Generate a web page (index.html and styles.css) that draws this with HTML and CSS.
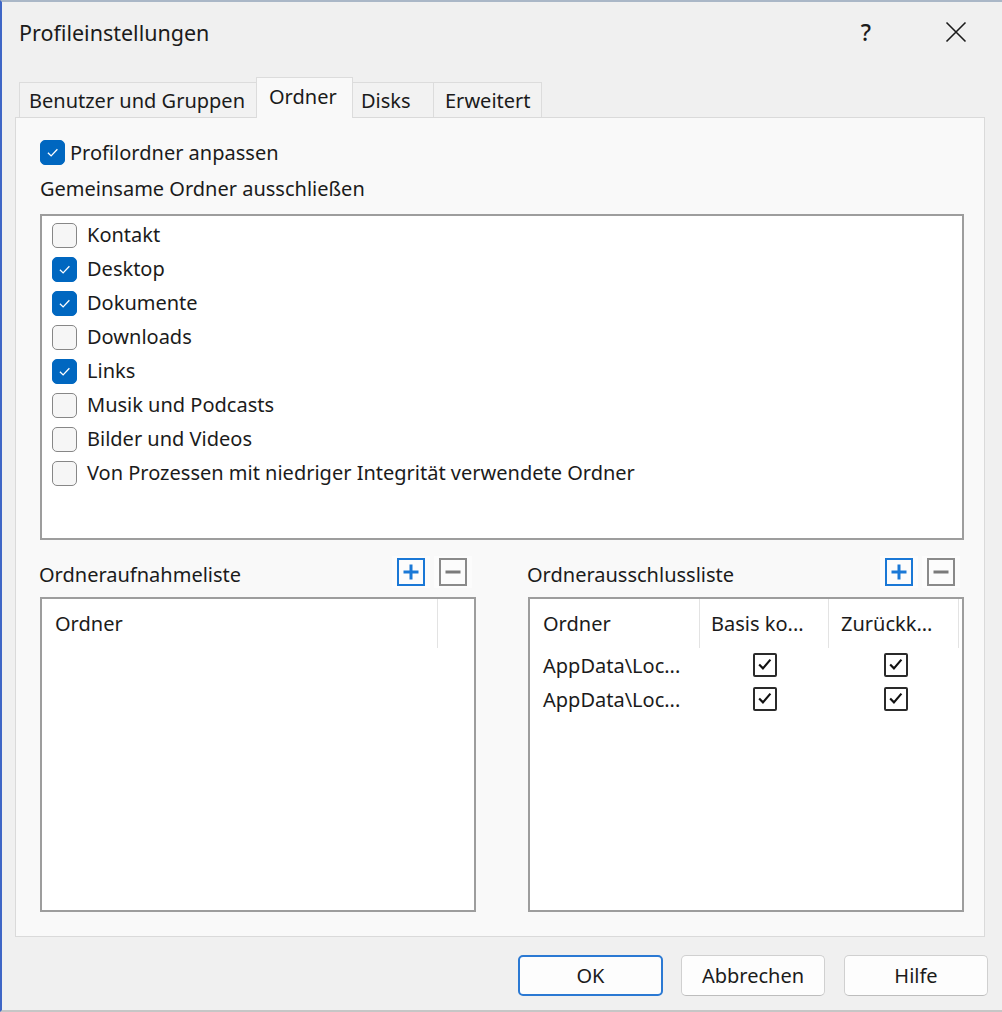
FILE: index.html
```html
<!DOCTYPE html>
<html lang="de">
<head>
<meta charset="utf-8">
<title>Profileinstellungen</title>
<link rel="stylesheet" href="styles.css">
</head>
<body>
<div class="window">
  <div class="titlebar">
    <span class="title">Profileinstellungen</span>
    <span class="help">?</span>
    <span class="close">
      <svg width="22" height="22" viewBox="0 0 22 22"><path d="M1.5 1.5 L20.5 20.5 M20.5 1.5 L1.5 20.5" stroke="#1b1b1b" stroke-width="1.6" fill="none"/></svg>
    </span>
  </div>

  <div class="tabs">
    <div class="tab tab-users">Benutzer und Gruppen</div>
    <div class="tab tab-folders active">Ordner</div>
    <div class="tab tab-disks">Disks</div>
    <div class="tab tab-advanced">Erweitert</div>
  </div>

  <div class="panel">
    <label class="check-row">
      <span class="cb checked"><svg viewBox="0 0 25 25"><path d="M7.5 12.8 L11 16.2 L17.8 9" stroke="#fff" stroke-width="1.4" fill="none"/></svg></span>
      <span class="cb-label">Profilordner anpassen</span>
    </label>
    <div class="section-label">Gemeinsame Ordner ausschließen</div>

    <div class="listbox">
      <div class="item"><span class="cb"></span><span class="cb-label">Kontakt</span></div>
      <div class="item"><span class="cb checked"><svg viewBox="0 0 25 25"><path d="M7.5 12.8 L11 16.2 L17.8 9" stroke="#fff" stroke-width="1.4" fill="none"/></svg></span><span class="cb-label">Desktop</span></div>
      <div class="item"><span class="cb checked"><svg viewBox="0 0 25 25"><path d="M7.5 12.8 L11 16.2 L17.8 9" stroke="#fff" stroke-width="1.4" fill="none"/></svg></span><span class="cb-label">Dokumente</span></div>
      <div class="item"><span class="cb"></span><span class="cb-label">Downloads</span></div>
      <div class="item"><span class="cb checked"><svg viewBox="0 0 25 25"><path d="M7.5 12.8 L11 16.2 L17.8 9" stroke="#fff" stroke-width="1.4" fill="none"/></svg></span><span class="cb-label">Links</span></div>
      <div class="item"><span class="cb"></span><span class="cb-label">Musik und Podcasts</span></div>
      <div class="item"><span class="cb"></span><span class="cb-label">Bilder und Videos</span></div>
      <div class="item"><span class="cb"></span><span class="cb-label">Von Prozessen mit niedriger Integrität verwendete Ordner</span></div>
    </div>

    <div class="lists">
      <div class="list-col">
        <div class="list-head">
          <span class="list-title">Ordneraufnahmeliste</span>
          <div class="tools">
            <span class="tool add"><svg viewBox="0 0 28 28"><rect x="1" y="1" width="26" height="26" fill="none" stroke="#1a78d6" stroke-width="2"/><path d="M14 6.5 V21.5 M6.5 14 H21.5" stroke="#1a78d6" stroke-width="3"/></svg></span>
            <span class="tool remove"><svg viewBox="0 0 28 28"><rect x="1" y="1" width="26" height="26" fill="none" stroke="#8a8a8a" stroke-width="2"/><path d="M6.5 14 H21.5" stroke="#7a7a7a" stroke-width="3"/></svg></span>
          </div>
        </div>
        <div class="grid">
          <div class="grid-header">
            <div class="gh gh-incl">Ordner</div>
          </div>
        </div>
      </div>

      <div class="list-col">
        <div class="list-head">
          <span class="list-title">Ordnerausschlussliste</span>
          <div class="tools">
            <span class="tool add"><svg viewBox="0 0 28 28"><rect x="1" y="1" width="26" height="26" fill="none" stroke="#1a78d6" stroke-width="2"/><path d="M14 6.5 V21.5 M6.5 14 H21.5" stroke="#1a78d6" stroke-width="3"/></svg></span>
            <span class="tool remove"><svg viewBox="0 0 28 28"><rect x="1" y="1" width="26" height="26" fill="none" stroke="#8a8a8a" stroke-width="2"/><path d="M6.5 14 H21.5" stroke="#7a7a7a" stroke-width="3"/></svg></span>
          </div>
        </div>
        <div class="grid">
          <div class="grid-header">
            <div class="gh c1">Ordner</div>
            <div class="gh c2">Basis ko...</div>
            <div class="gh c3">Zurückk...</div>
          </div>
          <div class="grid-row">
            <div class="gc c1">AppData\Loc...</div>
            <div class="gc c2 center"><span class="ccb"><svg viewBox="0 0 24 24"><path d="M5 11.5 L9.5 16 L18.5 5.5" stroke="#111" stroke-width="2.6" fill="none"/></svg></span></div>
            <div class="gc c3 center"><span class="ccb"><svg viewBox="0 0 24 24"><path d="M5 11.5 L9.5 16 L18.5 5.5" stroke="#111" stroke-width="2.6" fill="none"/></svg></span></div>
          </div>
          <div class="grid-row">
            <div class="gc c1">AppData\Loc...</div>
            <div class="gc c2 center"><span class="ccb"><svg viewBox="0 0 24 24"><path d="M5 11.5 L9.5 16 L18.5 5.5" stroke="#111" stroke-width="2.6" fill="none"/></svg></span></div>
            <div class="gc c3 center"><span class="ccb"><svg viewBox="0 0 24 24"><path d="M5 11.5 L9.5 16 L18.5 5.5" stroke="#111" stroke-width="2.6" fill="none"/></svg></span></div>
          </div>
        </div>
      </div>
    </div>
  </div>

  <div class="footer">
    <button class="btn default">OK</button>
    <button class="btn">Abbrechen</button>
    <button class="btn">Hilfe</button>
  </div>
</div>
</body>
</html>
```

FILE: styles.css
```css
* { box-sizing: border-box; }
html, body { margin: 0; padding: 0; }
body {
  font-family: "Noto Sans", "Open Sans", sans-serif;
  font-size: 20px;
  color: #1b1b1b;
  background: #f0f0f0;
}
.window {
  width: 1002px;
  height: 1012px;
  background: #f0f0f0;
  border-top: 2px solid #aab7c7;
  border-left: 2px solid #3f66c6;
  border-bottom: 2px solid #c6c6c6;
  overflow: hidden;
}
.titlebar {
  height: 60px;
  display: flex;
  align-items: center;
  padding-left: 17px;
}
.title { flex: 1; font-size: 21.5px; }
.help { width: 22px; text-align: center; font-size: 23px; font-weight: 500; margin-right: 68px; }
.close { width: 22px; height: 22px; margin-right: 35px; display: flex; }

.tabs {
  margin-top: 15px;
  height: 40px;
  padding-left: 17px;
  display: flex;
  align-items: flex-end;
}
.tab {
  height: 35px;
  border: 1px solid #dcdcdc;
  border-bottom: none;
  background: #f2f2f2;
  display: flex;
  align-items: center;
  padding-left: 9px;
  margin-right: -1px;
  position: relative;
}
.tab.active {
  height: 41px;
  background: #f9f9f9;
  margin-bottom: -1px;
  z-index: 1;
  padding-left: 12px;
  padding-bottom: 4px;
}
.tab-users { width: 238px; }
.tab-folders { width: 97px; }
.tab-disks { width: 82px; padding-left: 8px; }
.tab-advanced { width: 109px; padding-left: 11px; }

.panel {
  margin-left: 13px;
  width: 970px;
  height: 820px;
  background: #f9f9f9;
  border: 1px solid #dadada;
  padding: 22px 20px 0 24px;
}
.check-row {
  display: flex;
  align-items: center;
  height: 25px;
}
.cb {
  width: 25px;
  height: 25px;
  border: 1.5px solid #878787;
  border-radius: 5px;
  background: #f6f6f6;
  flex: none;
  display: flex;
}
.cb.checked { background: #0067c0; border-color: #0067c0; }
.cb svg { width: 100%; height: 100%; }
.cb-label { margin-left: 5px; line-height: 26px; }

.section-label {
  margin-top: 11px;
  line-height: 26px;
}
.listbox {
  margin-top: 12px;
  width: 924px;
  height: 326px;
  background: #fff;
  border: 2px solid #9d9d9d;
  padding: 2px 0 0 10px;
}
.item {
  height: 34px;
  display: flex;
  align-items: center;
}
.item .cb-label { margin-left: 10px; }

.lists {
  margin-top: 16px;
  display: flex;
  gap: 52px;
}
.list-col { width: 436px; }
.list-head {
  height: 32px;
  display: flex;
  align-items: flex-end;
  justify-content: space-between;
}
.list-title { line-height: 26px; margin-left: -1px; }
.tools {
  display: flex;
  gap: 4px;
  margin-right: 4px;
  align-self: flex-start;
}
.tool {
  width: 38px;
  height: 32px;
  display: flex;
  align-items: center;
  justify-content: center;
  background: #fcfcfc;
}
.tool svg { width: 28px; height: 28px; }

.grid {
  margin-top: 9px;
  height: 315px;
  background: #fff;
  border: 2px solid #9d9d9d;
}
.grid-header {
  height: 49px;
  display: flex;
}
.gh {
  height: 49px;
  display: flex;
  align-items: center;
  border-right: 1px solid #e3e3e3;
}
.gh-incl { width: 396px; padding-left: 13px; }
.c1 { width: 170px; padding-left: 13px; white-space: nowrap; }
.c2 { width: 129px; padding-left: 11px; white-space: nowrap; }
.c3 { width: 130px; padding-left: 12px; white-space: nowrap; }
.grid-row {
  height: 34px;
  display: flex;
}
.gc {
  display: flex;
  align-items: center;
}
.gc.center { justify-content: center; padding-left: 0; }
.c3.center { padding-left: 4px; }
.ccb {
  width: 24px;
  height: 24px;
  border: 2px solid #2a2a2a;
  border-radius: 2px;
  background: #fff;
  display: flex;
}
.ccb svg { width: 100%; height: 100%; }

.footer {
  margin-top: 18px;
  display: flex;
  justify-content: flex-end;
  padding-right: 14px;
}
.btn {
  width: 144px;
  height: 41px;
  font: inherit;
  color: #1b1b1b;
  background: #fdfdfd;
  border: 1px solid #d0d0d0;
  border-bottom-color: #bdbdbd;
  border-radius: 5px;
  margin-left: 19px;
}
.btn.default { width: 145px; border: 2px solid #2b79d3; margin-left: 0; }
.btn.default + .btn { margin-left: 18px; }
```
